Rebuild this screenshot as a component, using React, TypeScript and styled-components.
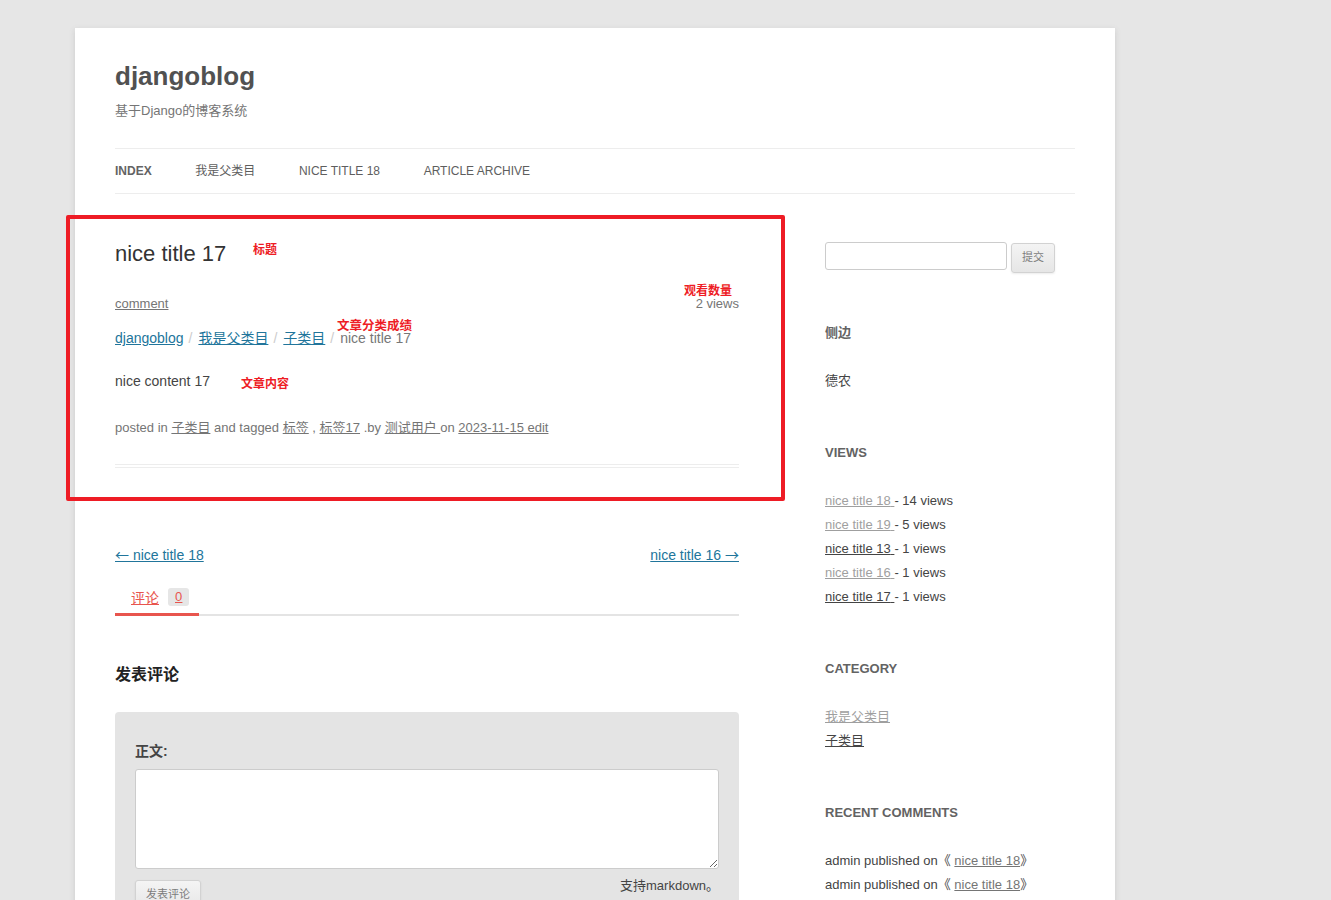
import React from "react";
import styled, { createGlobalStyle } from "styled-components";

const GlobalStyle = createGlobalStyle`
  html, body {
    margin: 0;
    padding: 0;
    background: #e6e6e6;
  }
  body {
    font-family: "Liberation Sans", "Noto Sans CJK SC", Arial, sans-serif;
    color: #444;
  }
  * { box-sizing: border-box; }
`;

const Page = styled.div`
  width: 1040px;
  margin: 28px 0 0 75px;
  padding: 0 40px 40px;
  background: #fff;
  box-shadow: 0 2px 6px rgba(100, 100, 100, 0.2);
  min-height: 900px;
`;

const Header = styled.header`
  padding-top: 24px;
`;

const SiteTitle = styled.h1`
  margin: 0;
  font-size: 26px;
  line-height: 48px;
  font-weight: bold;
  color: #515151;
`;

const SiteDescription = styled.h2`
  margin: 0;
  font-size: 13px;
  line-height: 22px;
  font-weight: normal;
  color: #757575;
`;

const Nav = styled.nav`
  margin-top: 26px;
  border-top: 1px solid #ededed;
  border-bottom: 1px solid #ededed;
  display: flex;
  gap: 43.6px;
`;

const NavItem = styled.a<{ $current?: boolean }>`
  font-size: 12px;
  line-height: 44px;
  text-transform: uppercase;
  text-decoration: none;
  color: ${(p) => (p.$current ? "#636363" : "#5e5e5e")};
  font-weight: ${(p) => (p.$current ? "bold" : "normal")};
`;

const Main = styled.div`
  margin-top: 48px;
  display: flex;
  justify-content: space-between;
  align-items: flex-start;
`;

const Content = styled.div`
  width: 624px;
`;

const Article = styled.article`
  position: relative;
  padding-bottom: 24px;
  border-bottom: 4px double #ededed;
`;

const EntryTitle = styled.h1`
  margin: 0;
  font-size: 22px;
  line-height: 24px;
  font-weight: normal;
  color: #333;
`;

const MetaRow = styled.div`
  margin-top: 26px;
  display: flex;
  justify-content: space-between;
  font-size: 13px;
  line-height: 24px;
  color: #757575;
`;

const GreyLink = styled.a`
  color: #757575;
  text-decoration: underline;
`;

const Breadcrumb = styled.ol`
  margin: 12px 0 0;
  padding: 0;
  list-style: none;
  display: flex;
  font-size: 14px;
  line-height: 20px;

  li + li::before {
    content: "/";
    color: #ccc;
    padding: 0 6px 0 5px;
  }
`;

const Crumb = styled.li<{ $active?: boolean }>`
  color: ${(p) => (p.$active ? "#777" : "#21759b")};
`;

const BlueLink = styled.a`
  color: #21759b;
  text-decoration: underline;
`;

const Arrow = styled.span`
  font-family: "Noto Sans CJK SC", sans-serif;
  line-height: 1;
`;

const EntryContent = styled.p`
  margin: 21px 0 0;
  font-size: 14px;
  line-height: 24px;
  color: #444;
`;

const EntryMeta = styled.footer`
  margin-top: 23px;
  font-size: 13px;
  line-height: 24px;
  color: #757575;
`;

const Annotation = styled.span<{ $top: number; $left: number; $size?: number }>`
  position: absolute;
  top: ${(p) => p.$top}px;
  left: ${(p) => p.$left}px;
  font-size: ${(p) => p.$size ?? 12}px;
  line-height: 16px;
  font-weight: bold;
  color: #ee1c25;
  white-space: nowrap;
`;

const RedFrame = styled.div`
  position: absolute;
  top: -27px;
  left: -49px;
  width: 719px;
  height: 286px;
  border: 4px solid #ee1c25;
  border-radius: 2px;
  pointer-events: none;
`;

const NavSingle = styled.nav`
  margin-top: 75px;
  height: 24px;
  display: flex;
  justify-content: space-between;
  font-size: 14px;
  line-height: 24px;
`;

const TabBar = styled.div`
  margin-top: 16px;
  display: flex;
  border-bottom: 2px solid #e4e4e4;
`;

const Tab = styled.a`
  display: flex;
  align-items: center;
  gap: 9px;
  height: 33px;
  padding: 0 10px 3px 16px;
  margin-bottom: -2px;
  border-bottom: 3px solid #e8554e;
  color: #e8554e;
  font-size: 14px;
  text-decoration: underline;
`;

const Badge = styled.span`
  display: inline-block;
  background: #e6e6e6;
  border-radius: 3px;
  padding: 0 7px;
  font-size: 13px;
  line-height: 18px;
  color: #e8554e;
  text-decoration: underline;
`;

const ReplyTitle = styled.h3`
  margin: 47px 0 0;
  font-size: 16px;
  line-height: 24px;
  font-weight: bold;
  color: #222;
`;

const FormBox = styled.form`
  margin-top: 25px;
  background: #e4e4e4;
  border-radius: 4px;
  padding: 29px 20px 24px;
`;

const FieldLabel = styled.label`
  display: block;
  font-size: 14px;
  line-height: 20px;
  font-weight: bold;
  color: #444;
`;

const TextArea = styled.textarea`
  display: block;
  margin-top: 8px;
  width: 100%;
  height: 100px;
  border: 1px solid #ccc;
  border-radius: 3px;
  background: #fff;
  resize: vertical;
`;

const FormFooter = styled.div`
  margin-top: 11px;
  display: flex;
  justify-content: space-between;
  align-items: flex-start;
`;

const Button = styled.button`
  padding: 6px 10px;
  font-family: inherit;
  font-size: 11px;
  line-height: 15.7px;
  color: #7c7c7c;
  background: linear-gradient(to bottom, #f4f4f4, #e6e6e6);
  border: 1px solid #d2d2d2;
  border-radius: 3px;
  box-shadow: 0 1px 2px rgba(64, 64, 64, 0.1);
`;

const Hint = styled.span`
  font-size: 13px;
  line-height: 12px;
  color: #444;
`;

const Sidebar = styled.aside`
  width: 250px;
`;

const SearchForm = styled.div`
  display: flex;
  gap: 4px;
  align-items: flex-start;
`;

const SearchInput = styled.input`
  width: 182px;
  height: 28px;
  padding: 6px;
  border: 1px solid #ccc;
  border-radius: 3px;
`;

const SearchButton = styled(Button)`
  margin-top: 1px;
  width: 44px;
  padding: 6px 0;
`;

const Widget = styled.section`
  margin-top: 48px;
  font-size: 13px;
  line-height: 24px;
  color: #444;
`;

const WidgetTitle = styled.h3`
  margin: 0 0 24px;
  font-size: 13px;
  line-height: 24px;
  font-weight: bold;
  text-transform: uppercase;
  color: #636363;
`;

const WidgetList = styled.ul`
  margin: 0;
  padding: 0;
  list-style: none;
`;

const WidgetLink = styled.a<{ $visited?: boolean }>`
  color: ${(p) => (p.$visited ? "#9f9f9f" : "#444")};
  text-decoration: underline;
`;

const views = [
  { t: "nice title 18", v: 14, visited: true },
  { t: "nice title 19", v: 5, visited: true },
  { t: "nice title 13", v: 1, visited: false },
  { t: "nice title 16", v: 1, visited: true },
  { t: "nice title 17", v: 1, visited: false },
];

export default function App() {
  return (
    <>
      <GlobalStyle />
      <Page>
        <Header>
          <SiteTitle>djangoblog</SiteTitle>
          <SiteDescription>基于Django的博客系统</SiteDescription>
          <Nav>
            <NavItem $current>Index</NavItem>
            <NavItem>我是父类目</NavItem>
            <NavItem>nice title 18</NavItem>
            <NavItem>Article archive</NavItem>
          </Nav>
        </Header>
        <Main>
          <Content>
            <Article>
              <EntryTitle>nice title 17</EntryTitle>
              <MetaRow>
                <GreyLink href="#">comment</GreyLink>
                <span>2 views</span>
              </MetaRow>
              <Breadcrumb>
                <Crumb><BlueLink href="#">djangoblog</BlueLink></Crumb>
                <Crumb><BlueLink href="#">我是父类目</BlueLink></Crumb>
                <Crumb><BlueLink href="#">子类目</BlueLink></Crumb>
                <Crumb $active>nice title 17</Crumb>
              </Breadcrumb>
              <EntryContent>nice content 17</EntryContent>
              <EntryMeta>
                posted in <GreyLink href="#">子类目</GreyLink> and tagged{" "}
                <GreyLink href="#">标签</GreyLink> , <GreyLink href="#">标签17</GreyLink> .by{" "}
                <GreyLink href="#">测试用户 </GreyLink>on{" "}
                <GreyLink href="#">2023-11-15 edit</GreyLink>
              </EntryMeta>
              <Annotation $top={0} $left={138}>标题</Annotation>
              <Annotation $top={41} $left={569}>观看数量</Annotation>
              <Annotation $top={76} $left={222} $size={12.5}>文章分类成绩</Annotation>
              <Annotation $top={134} $left={126}>文章内容</Annotation>
              <RedFrame />
            </Article>
            <NavSingle>
              <BlueLink href="#"><Arrow>←</Arrow> nice title 18</BlueLink>
              <BlueLink href="#">nice title 16 <Arrow>→</Arrow></BlueLink>
            </NavSingle>
            <TabBar>
              <Tab href="#">
                评论 <Badge>0</Badge>
              </Tab>
            </TabBar>
            <ReplyTitle>发表评论</ReplyTitle>
            <FormBox>
              <FieldLabel>正文:</FieldLabel>
              <TextArea />
              <FormFooter>
                <Button type="button">发表评论</Button>
                <Hint>支持markdown。</Hint>
              </FormFooter>
            </FormBox>
          </Content>
          <Sidebar>
            <SearchForm>
              <SearchInput type="text" />
              <SearchButton type="button">提交</SearchButton>
            </SearchForm>
            <Widget>
              <WidgetTitle>侧边</WidgetTitle>
              <div>德农</div>
            </Widget>
            <Widget>
              <WidgetTitle>Views</WidgetTitle>
              <WidgetList>
                {views.map((v) => (
                  <li key={v.t}>
                    <WidgetLink href="#" $visited={v.visited}>{v.t} </WidgetLink>- {v.v} views
                  </li>
                ))}
              </WidgetList>
            </Widget>
            <Widget>
              <WidgetTitle>Category</WidgetTitle>
              <WidgetList>
                <li><WidgetLink href="#" $visited>我是父类目</WidgetLink></li>
                <li><WidgetLink href="#">子类目</WidgetLink></li>
              </WidgetList>
            </Widget>
            <Widget>
              <WidgetTitle>Recent Comments</WidgetTitle>
              <WidgetList>
                <li>admin published on《 <GreyLink href="#">nice title 18</GreyLink>》</li>
                <li>admin published on《 <GreyLink href="#">nice title 18</GreyLink>》</li>
              </WidgetList>
            </Widget>
          </Sidebar>
        </Main>
      </Page>
    </>
  );
}
